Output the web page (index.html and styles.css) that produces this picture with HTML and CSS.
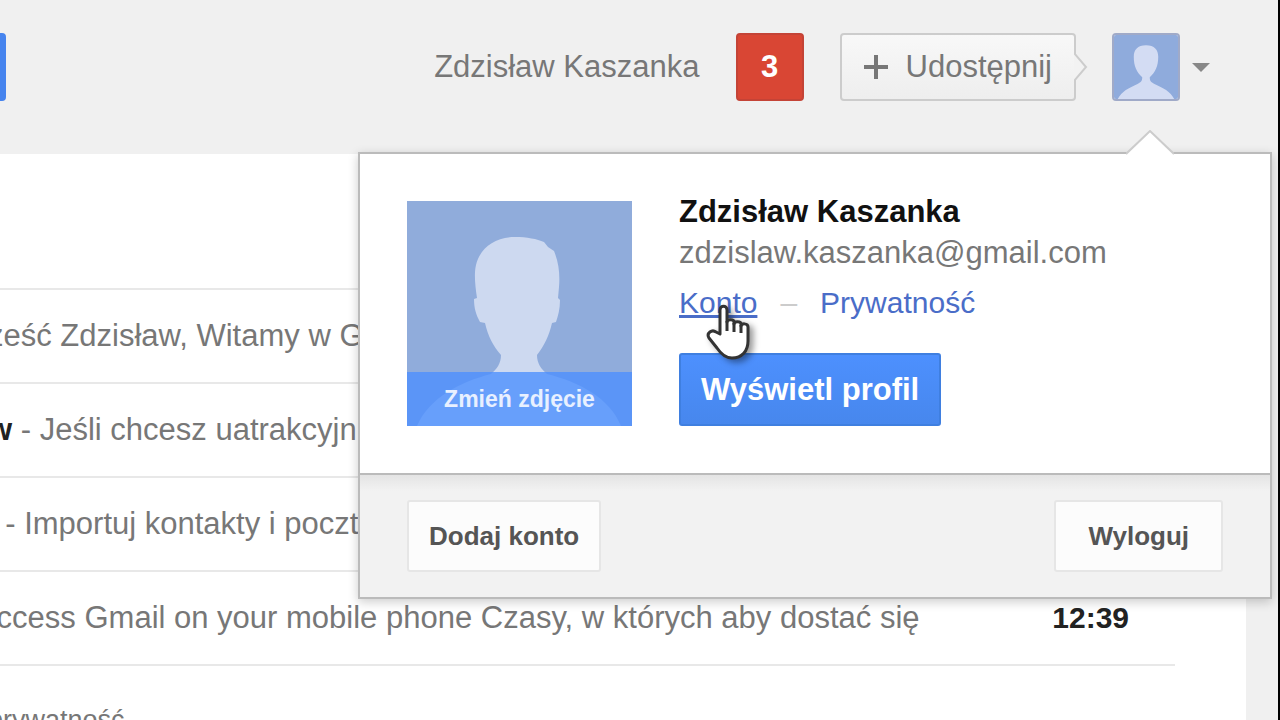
FILE: index.html
```html
<!DOCTYPE html>
<html lang="pl">
<head>
    <meta charset="UTF-8">
    <meta name="viewport" content="width=device-width, initial-scale=1.0">
    <title>Gmail</title>
    <link rel="stylesheet" href="styles.css">
</head>
<body>
    <header class="topbar">
        <button class="search-button" aria-label="Szukaj"></button>
        <div class="user-tools">
            <span class="user-name">Zdzisław Kaszanka</span>
            <button class="badge">3</button>
            <button class="share">
                <svg class="plus" viewBox="0 0 24 24"><path d="M12 0v24M0 12h24"/></svg>
                Udostępnij
                <svg class="share-tip" viewBox="0 0 14 28"><path d="M0 0L12 14L0 28"/></svg>
            </button>
            <button class="avatar-button" aria-label="Konto użytkownika">
                <svg class="avatar" viewBox="0 0 68 68">
                    <rect width="68" height="68" fill="#8fabdc"/>
                    <path fill="#d3dcf3" d="M34 11c9 0 13 5 13 12c0 10-3 16-9 22c0 4 1 5 5 7c9 4 17 8 21 16H4c4-8 12-12 21-16c4-2 5-3 5-7c-6-6-9-12-9-22c0-7 4-12 13-12z"/>
                </svg>
                <span class="caret"></span>
            </button>
        </div>

        <div class="popup">
            <svg class="popup-tip" viewBox="0 0 48 25"><path d="M0 24L24 1L48 24"/></svg>
            <div class="popup-main">
                <button class="photo">
                    <svg viewBox="0 0 225 225">
                        <rect width="225" height="225" fill="#90acdb"/>
                        <path fill="#cdd9f0" d="M108 36c12 0 22 2 29 5l4 5l6 4c5 12 6 24 5 36l-1 11l2 2c0 9-2 16-4 22l-4 1c-3 13-8 23-15 32c0 8 4 14 10 19c32 8 63 24 74 52H10c12-28 43-44 74-52c6-5 10-11 10-19c-8-9-13-19-16-32l-5-1c-4-7-6-14-6-23l3-1c-2-13-3-25-1-33c4-17 19-28 39-28z"/>
                    </svg>
                    <span class="photo-label">Zmień zdjęcie</span>
                </button>
                <div class="account">
                    <strong class="account-name">Zdzisław Kaszanka</strong>
                    <span class="account-mail">zdzislaw.kaszanka@gmail.com</span>
                    <div class="account-links">
                        <a class="hovered" href="#">Konto</a>
                        <span class="dash">–</span>
                        <a href="#">Prywatność</a>
                    </div>
                    <button class="profile-button">Wyświetl profil</button>
                </div>
            </div>
            <div class="popup-footer">
                <button class="small-button">Dodaj konto</button>
                <button class="small-button logout">Wyloguj</button>
            </div>
            <svg class="cursor" viewBox="0 0 44 56">
                <path d="M14 30V6c0-5 7-5 7 0v12c0-3 7-3 7 0v2c0-3 7-3 7 0v2c0-3 7-3 7 1v14c0 10-6 17-16 17c-7 0-11-4-15-10L3 34c-3-5 3-9 7-6z"/>
                <path d="M21 17v10M28 19v9M35 21v8"/>
            </svg>
        </div>
    </header>

    <main class="inbox">
        <ul class="mail-list">
            <li class="mail"><span>ześć Zdzisław, Witamy w G</span></li>
            <li class="mail"><span><b>w</b> - Jeśli chcesz uatrakcyjn</span></li>
            <li class="mail"><span>&nbsp;&nbsp;- Importuj kontakty i poczt</span></li>
            <li class="mail"><span>&nbsp;ccess Gmail on your mobile phone Czasy, w których aby dostać się</span><time>12:39</time></li>
        </ul>
        <footer class="inbox-footer">prywatność</footer>
    </main>
</body>
</html>
```
FILE: styles.css
```css
* {
    box-sizing: border-box;
}
body {
    font-family: "Liberation Sans", Arial, sans-serif;
    font-size: 31px;
    line-height: 40px;
    margin: 0;
    min-height: 100vh;
    display: flex;
    flex-direction: column;
    color: #777;
    background-color: #f0f0f0;
    border-right: 2px solid #000;
    overflow: hidden;
}
button {
    font: inherit;
    margin: 0;
    padding: 0;
    border: none;
    background: none;
    cursor: pointer;
}
svg {
    display: block;
}
a {
    color: #4a6dc8;
    text-decoration: none;
}

/* top bar */
.topbar {
    position: relative;
    display: flex;
    justify-content: space-between;
    align-items: center;
    height: 154px;
    padding: 0 68px 20px 0;
}
.search-button {
    width: 6px;
    height: 68px;
    background-color: #4684ee;
    border-radius: 0 4px 4px 0;
}
.user-tools {
    display: flex;
    align-items: center;
    gap: 36px;
}
.badge {
    width: 68px;
    height: 68px;
    background-color: #d94634;
    border: 2px solid #c44336;
    border-radius: 4px;
    color: #fff;
    font-weight: bold;
}
.share {
    position: relative;
    display: flex;
    align-items: center;
    gap: 18px;
    height: 68px;
    padding: 0 22px;
    border: 2px solid #ccc;
    border-radius: 4px;
    background: linear-gradient(#f8f8f8, #eee);
    color: #777;
}
.plus {
    width: 24px;
    height: 24px;
    stroke: #777;
    stroke-width: 4;
}
.share-tip {
    position: absolute;
    left: 100%;
    width: 14px;
    height: 28px;
    fill: #f2f2f2;
    stroke: #ccc;
    stroke-width: 2;
}
.avatar-button {
    display: flex;
    align-items: center;
    gap: 12px;
}
.avatar {
    width: 68px;
    height: 68px;
    border: 2px solid #a0aac8;
    border-radius: 4px;
}
.caret {
    border: 9px solid transparent;
    border-top-color: #888;
    border-bottom: none;
}

/* account popup */
.popup {
    position: absolute;
    z-index: 1;
    top: 152px;
    right: 6px;
    width: 914px;
    background-color: #fff;
    border: 2px solid #bbb;
    box-shadow: 0 3px 10px rgba(0, 0, 0, 0.2);
}
.popup-tip {
    position: absolute;
    top: -24px;
    right: 96px;
    width: 48px;
    height: 25px;
    fill: #fff;
    stroke: #ccc;
    stroke-width: 2;
}
.popup-main {
    display: flex;
    gap: 47px;
    padding: 47px;
}
.photo {
    position: relative;
    width: 225px;
    height: 225px;
}
.photo-label {
    position: absolute;
    left: 0;
    right: 0;
    bottom: 0;
    height: 54px;
    line-height: 54px;
    background-color: rgba(77, 144, 254, 0.8);
    color: #e8f0ff;
    font-size: 23px;
    font-weight: bold;
}
.account {
    display: flex;
    flex-direction: column;
    align-items: flex-start;
}
.account-name {
    color: #111;
    line-height: 22px;
}
.account-mail {
    line-height: 60px;
}
.account-links {
    display: flex;
    gap: 23px;
    font-size: 30px;
}
.hovered {
    text-decoration: underline;
}
.dash {
    color: #ccc;
}
.profile-button {
    margin-top: auto;
    height: 73px;
    padding: 0 20px;
    background: linear-gradient(#4d90fe, #4787ed);
    border: 2px solid #3f7fe0;
    border-radius: 3px;
    color: #fff;
    font-weight: bold;
}
.popup-footer {
    display: flex;
    justify-content: space-between;
    padding: 25px 47px;
    border-top: 2px solid #bbb;
    background: linear-gradient(#e4e4e4, #f2f2f2 16px);
}
.small-button {
    height: 72px;
    padding: 0 20px;
    background-color: #fcfcfc;
    border: 2px solid #e6e6e6;
    border-radius: 3px;
    color: #555;
    font-size: 26px;
    font-weight: bold;
}
.logout {
    padding: 0 32px;
}
.cursor {
    position: absolute;
    top: 150px;
    left: 346px;
    width: 44px;
    height: 56px;
    fill: #fff;
    stroke: #333;
    stroke-width: 3;
    stroke-linejoin: round;
    filter: drop-shadow(4px 3px 3px rgba(0, 0, 0, 0.4));
}

/* message list */
.inbox {
    flex: 1;
    margin-right: 32px;
    padding-top: 134px;
    background-color: #fff;
}
.mail-list {
    list-style: none;
    margin: 0 71px 0 0;
    padding: 0;
    border-top: 2px solid #e8e8e8;
}
.mail {
    display: flex;
    justify-content: space-between;
    align-items: center;
    height: 94px;
    padding-right: 46px;
    border-bottom: 2px solid #e8e8e8;
    white-space: nowrap;
}
.mail span {
    margin-left: -12px;
}
.mail b,
.mail time {
    color: #222;
    font-weight: bold;
}
.mail time {
    font-size: 30px;
}
.inbox-footer {
    margin: 34px 0 0 -12px;
    height: 20px;
    font-size: 27px;
}
```
